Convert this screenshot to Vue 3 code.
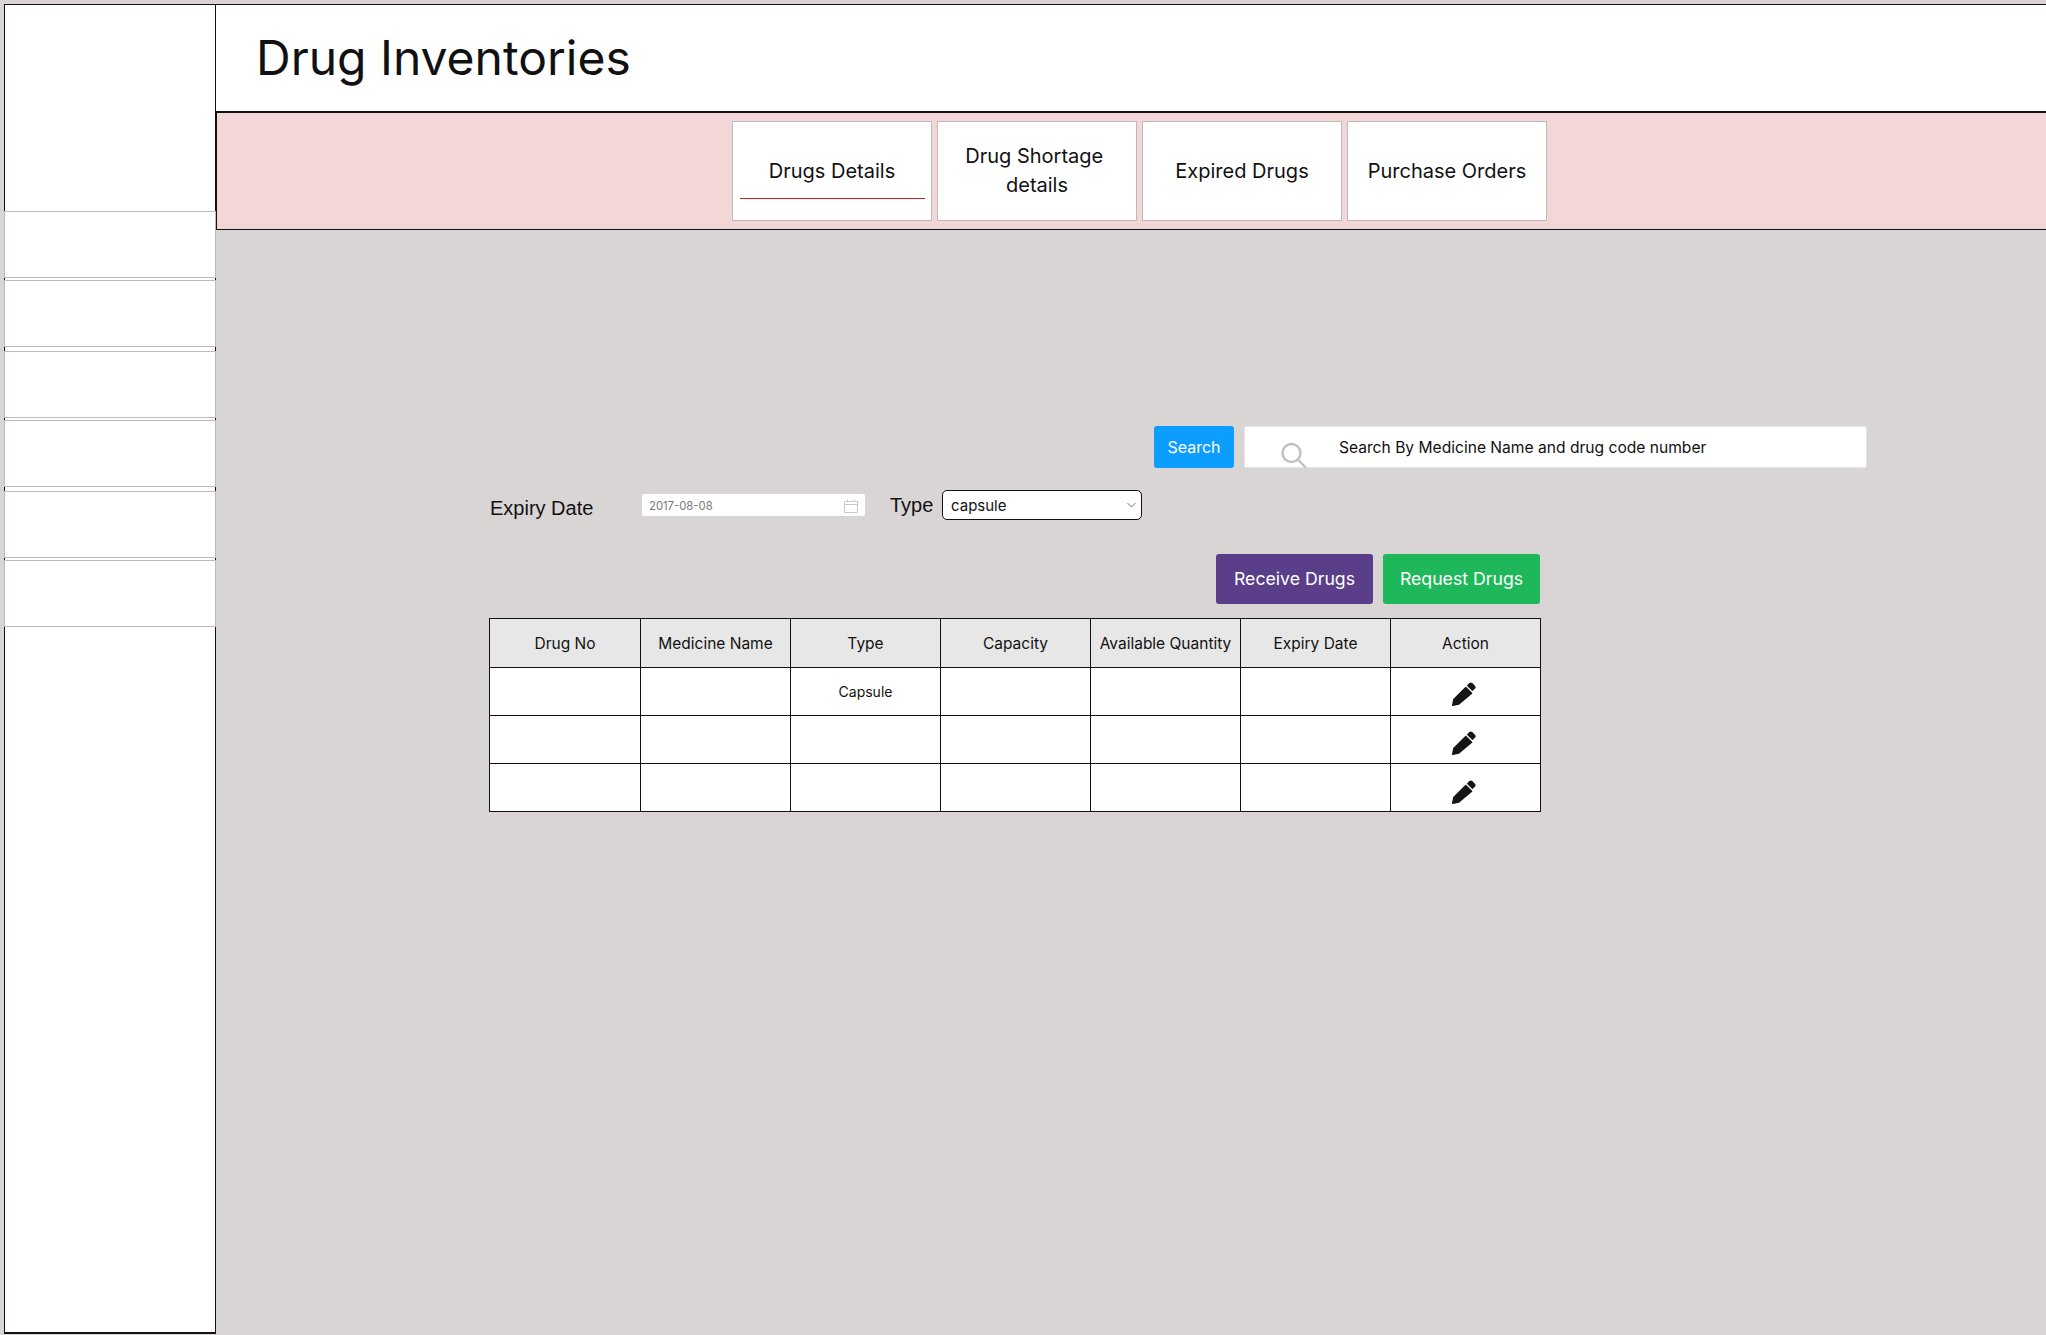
<template>
  <div class="page">
    <aside class="sidebar">
      <div class="side-logo"></div>
      <div v-for="n in 6" :key="n" class="side-item"></div>
    </aside>

    <main class="main">
      <header class="title-bar">
        <h1>Drug Inventories</h1>
      </header>

      <nav class="tabs">
        <div v-for="tab in tabs" :key="tab" class="tab" :class="{ active: tab === 'Drugs Details' }">
          <span>{{ tab }}</span>
        </div>
      </nav>

      <section class="content">
        <div class="search-row">
          <button class="btn btn-search">Search</button>
          <div class="search-box">
            <svg class="search-icon" width="28" height="26" viewBox="0 0 28 26" fill="none" stroke="#bfc1c4" stroke-width="2.4">
              <circle cx="11.5" cy="11" r="9" />
              <path d="M18 17.5l8 8.5" />
            </svg>
            <span>Search By Medicine Name and drug code number</span>
          </div>
        </div>

        <div class="filter-row">
          <label class="expiry-label">Expiry Date</label>
          <div class="date-box">
            <span>2017-08-08</span>
            <svg width="14" height="14" viewBox="0 0 14 14" fill="none" stroke="#c8c8c8" stroke-width="1">
              <path d="M.5 2.5h13v11H.5zM.5 5.5h13M3.5.5v2M10.5.5v2" />
            </svg>
          </div>
          <label class="type-label">Type</label>
          <div class="type-select">
            <span>capsule</span>
            <svg width="9" height="6" viewBox="0 0 9 6" fill="none" stroke="#777" stroke-width="1">
              <path d="M.5 1l4 4 4-4" />
            </svg>
          </div>
        </div>

        <div class="action-row">
          <button class="btn btn-receive">Receive Drugs</button>
          <button class="btn btn-request">Request Drugs</button>
        </div>

        <table class="drug-table">
          <thead>
            <tr>
              <th v-for="col in columns" :key="col">{{ col }}</th>
            </tr>
          </thead>
          <tbody>
            <tr v-for="(row, i) in rows" :key="i">
              <td></td>
              <td></td>
              <td>{{ row.type }}</td>
              <td></td>
              <td></td>
              <td></td>
              <td>
                <svg class="pencil" width="24" height="24" viewBox="0 0 24 24" fill="#151515">
                  <path d="M17.3 1.1a2.2 2.2 0 0 1 3 0l2.6 2.6a2.2 2.2 0 0 1 0 3l-2.1 2.1a.6.6 0 0 1-.8 0l-4.8-4.8a.6.6 0 0 1 0-.8z" />
                  <path d="M13.3 4.9a.7.7 0 0 1 1 0l5.8 5.8a.7.7 0 0 1 0 1L7 22.8.9 24a.8.8 0 0 1-.9-.9L1.2 17z" />
                </svg>
              </td>
            </tr>
          </tbody>
        </table>
      </section>
    </main>
  </div>
</template>

<script setup>
const tabs = ['Drugs Details', 'Drug Shortage\u00a0 details', 'Expired Drugs', 'Purchase Orders']
const columns = ['Drug No', 'Medicine Name', 'Type', 'Capacity', 'Available Quantity', 'Expiry Date', 'Action']
const rows = [{ type: 'Capsule' }, { type: '' }, { type: '' }]
</script>

<style>
html,
body {
  margin: 0;
  background: #d9d5d5;
}
</style>

<style scoped>
.page {
  display: flex;
  align-items: flex-start;
  padding-top: 4px;
  height: 1331px;
  overflow: hidden;
  font-family: Inter, "Liberation Sans", sans-serif;
  font-weight: 400;
  color: #111;
}

.sidebar {
  box-sizing: border-box;
  width: 212px;
  height: 1330px;
  margin-left: 4px;
  background: #fff;
  border: 1px solid #111;
  border-bottom-width: 2px;
}

.side-logo {
  height: 206px;
}

.side-item {
  box-sizing: border-box;
  height: 67px;
  margin: 0 -1px 2px;
  background: #fff;
  border: 1px solid #bbb;
}

.side-item:nth-child(odd) {
  margin-bottom: 4px;
}

.main {
  flex: 1;
  min-width: 0;
}

.title-bar {
  box-sizing: border-box;
  height: 107px;
  padding: 0 0 2px 40px;
  background: #fff;
  border-top: 1px solid #111;
  display: flex;
  align-items: center;
}

.title-bar h1 {
  margin: 0;
  font-size: 48px;
  font-weight: 400;
}

.tabs {
  box-sizing: border-box;
  height: 119px;
  padding: 8px 0 0 515px;
  display: flex;
  gap: 5px;
  background: #f3d6d8;
  border-top: 2px solid #111;
  border-bottom: 1px solid #111;
  border-left: 1px solid #111;
}

.tab {
  box-sizing: border-box;
  position: relative;
  width: 200px;
  height: 100px;
  padding: 0 14px;
  display: flex;
  align-items: center;
  justify-content: center;
  text-align: center;
  background: #fff;
  border: 1px solid #bbb;
  font-size: 20px;
  line-height: 29px;
}

.tab.active::after {
  content: "";
  position: absolute;
  left: 7px;
  right: 6px;
  top: 76px;
  height: 1px;
  background: #e01a22;
}

.content {
  padding: 196px 0 0 273px;
}

.search-row {
  display: flex;
  gap: 10px;
  margin-left: 665px;
}

.btn {
  border: 0;
  color: #fff;
  font-family: Inter, "Liberation Sans", sans-serif;
  font-weight: 400;
  border-radius: 3px;
  padding: 0;
}

.btn-search {
  width: 80px;
  height: 42px;
  background: #0d9dff;
  font-size: 16px;
}

.search-box {
  box-sizing: border-box;
  position: relative;
  width: 623px;
  height: 42px;
  padding-left: 94px;
  display: flex;
  align-items: center;
  background: #fff;
  border: 1px solid #e3e5ea;
  border-radius: 2px;
  font-size: 15.6px;
}

.search-icon {
  position: absolute;
  left: 35px;
  top: 15px;
}

.filter-row {
  display: flex;
  align-items: center;
  height: 30px;
  margin-top: 22px;
  font-family: "Liberation Sans", Arial, sans-serif;
}

.expiry-label {
  width: 153px;
  padding-left: 1px;
  box-sizing: border-box;
  font-size: 20px;
  position: relative;
  top: 3px;
}

.date-box {
  box-sizing: border-box;
  width: 223px;
  height: 22px;
  padding: 1px 7px 0 7px;
  display: flex;
  align-items: center;
  justify-content: space-between;
  background: #fff;
  border-radius: 2px;
  font-family: Inter, sans-serif;
  font-size: 11.3px;
  color: #777;
}

.type-label {
  margin-left: 25px;
  width: 52px;
  font-size: 20px;
}

.type-select {
  box-sizing: border-box;
  width: 200px;
  height: 30px;
  padding: 0 5px 0 8px;
  display: flex;
  align-items: center;
  justify-content: space-between;
  background: #fff;
  border: 1px solid #111;
  border-radius: 5px;
  font-family: Inter, sans-serif;
  font-size: 15px;
}

.action-row {
  display: flex;
  justify-content: flex-end;
  gap: 10px;
  width: 1051px;
  margin-top: 34px;
}

.btn-receive,
.btn-request {
  width: 157px;
  height: 50px;
  font-size: 17.7px;
  padding-bottom: 1px;
}

.btn-receive {
  background: #5a3e89;
}

.btn-request {
  background: #1eb85a;
}

.drug-table {
  width: 1052px;
  margin-top: 14px;
  border-collapse: collapse;
  table-layout: fixed;
  background: #fff;
}

.drug-table th,
.drug-table td {
  box-sizing: border-box;
  padding: 0;
  border: 1px solid #111;
  text-align: center;
  vertical-align: middle;
}

.drug-table th {
  height: 49px;
  background: #e7e7e7;
  font-size: 15.5px;
  font-weight: 400;
}

.drug-table th:first-child {
  width: 151px;
}

.drug-table td {
  height: 48px;
  font-size: 14px;
}

.pencil {
  display: block;
  position: relative;
  left: -2px;
  top: 2px;
  margin: 0 auto;
}

tr:nth-child(2) .pencil {
  top: 3px;
}

tr:nth-child(3) .pencil {
  top: 4px;
}
</style>
